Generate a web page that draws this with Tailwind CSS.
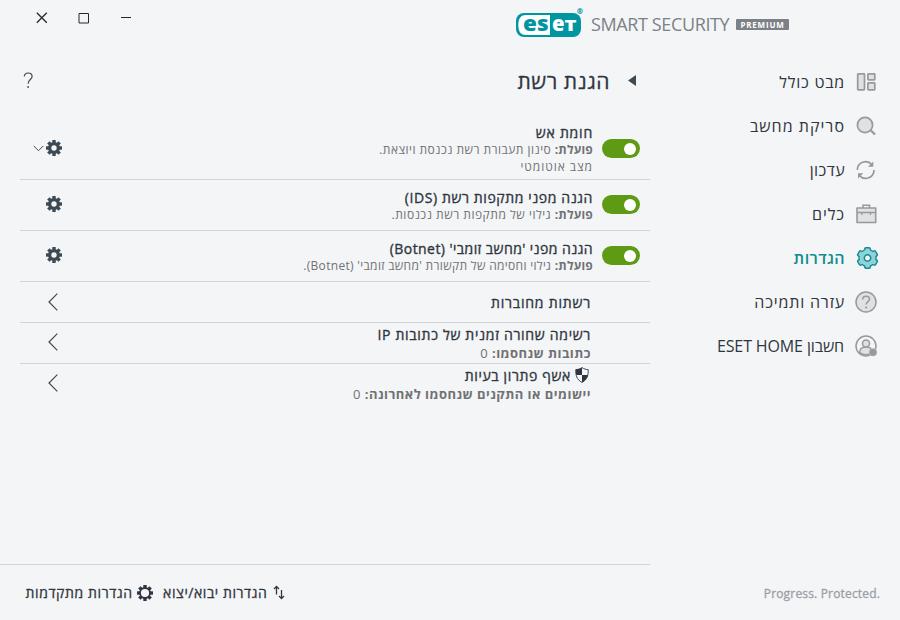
<!DOCTYPE html>
<html lang="he">
<head>
<meta charset="utf-8">
<title>ESET Smart Security Premium</title>
<script src="https://cdn.jsdelivr.net/npm/@tailwindcss/browser@4"></script>
</head>
<body class="w-[900px] h-[620px] overflow-hidden bg-[#f4f5f7] font-['Open_Sans','Noto_Sans',sans-serif] text-[#2f3640]">
<svg class="hidden">
  <symbol id="cog" viewBox="-8 -8 16 16">
    <g fill="#3d4a54"><g id="teeth"><rect x="-1.7" y="-8" width="3.4" height="16"/><rect x="-1.7" y="-8" width="3.4" height="16" transform="rotate(45)"/><rect x="-1.7" y="-8" width="3.4" height="16" transform="rotate(90)"/><rect x="-1.7" y="-8" width="3.4" height="16" transform="rotate(135)"/></g><circle r="6"/></g>
    <circle r="2.7" fill="#f4f5f7"/>
  </symbol>
  <symbol id="chev" viewBox="0 0 10 18"><path d="M9.3 .7 1 9l8.300 8.300" fill="none" stroke="#3d4a54" stroke-width="1.200"/></symbol>
</svg>

<div class="flex h-full flex-col">
  <header class="flex h-[48px] shrink-0">
    <div class="flex items-start pl-[36px] pt-[12px]">
      <svg class="w-[12px] h-[12px]" viewBox="0 0 12 12"><path d="M.8.8l10 10M10.800.8l-10 10" stroke="#24292f" stroke-width="1.300"/></svg>
      <svg class="ml-[30px] w-[12px] h-[12px]" viewBox="0 0 12 12"><path d="M1 1.500h9.500v9.500h-9.500z" fill="none" stroke="#24292f"/></svg>
      <svg class="ml-[30px] w-[12px] h-[12px]" viewBox="0 0 12 12"><path d="M1 5.500h10" stroke="#24292f"/></svg>
    </div>
    <div class="ml-[384px] flex">
      <svg class="mt-[8px] w-[68px] h-[30px]" viewBox="0 0 68 30">
        <rect x="0" y="5" width="65" height="24" rx="8" fill="#0096a1"/>
        <path d="M34 7H10C5 7 2.300 10 2.300 17S5 27 10 27h24z" fill="#fff"/>
        <text x="7" y="23" font-family="Open Sans" font-weight="800" font-size="21.500" fill="#0096a1" textLength="25.500" lengthAdjust="spacingAndGlyphs">es</text>
        <text x="36" y="23" font-family="Open Sans" font-weight="800" font-size="21.500" fill="#fff" textLength="12.500" lengthAdjust="spacingAndGlyphs">e</text>
        <text x="48.500" y="23" font-family="Open Sans" font-weight="800" font-size="16.500" fill="#fff" textLength="12" lengthAdjust="spacingAndGlyphs">T</text>
        <text x="61" y="6" font-family="Open Sans" font-size="7" fill="#0096a1" stroke="#0096a1" stroke-width=".2">®</text>
      </svg>
      <span class="ml-[7px] mt-[11px] w-[139px] whitespace-nowrap text-[18px] leading-[27px] tracking-[-0.38px] text-[#7b8186]">SMART SECURITY</span>
      <span class="ml-[6px] mt-[19px] flex h-[11px] w-[53px] items-center justify-center rounded-[1px] bg-[#7b8186]"><span class="text-[8px] font-bold leading-[11px] tracking-[0.8px] text-white">PREMIUM</span></span>
    </div>
  </header>

  <div class="flex flex-1">
    <main class="flex w-[650px] flex-col">
      <div class="flex h-[76px] items-start justify-between pl-[23px] pr-[14px]">
        <svg class="mt-[24px] w-[11px] h-[17px]" viewBox="0 0 11 17"><path d="M1.300 4.500C1.300 2.200 3 1 5.100 1s4 1.300 4 3.500c0 3-4 3.200-4 7.200" fill="none" stroke="#3d4a54" stroke-width="1.200"/><circle cx="5.100" cy="15" r=".9" fill="#3d4a54"/></svg>
        <div class="mt-[18px] flex items-center" dir="rtl">
          <svg class="w-[8px] h-[11px] -mt-[2px]" viewBox="0 0 8 11"><path d="M8 0v11L0 5.500z" fill="#3d4a54"/></svg>
          <h1 class="mr-[18px] whitespace-nowrap text-[21px] leading-[30px] tracking-[0.55px] [-webkit-text-stroke:0.3px]">הגנת רשת</h1>
        </div>
      </div>

      <section class="ml-[20px]">
        <div class="flex h-[56px] border-b border-[#d2d5d8] pl-[13px] pr-[10px]">
          <svg class="mt-[21px] w-[11px] h-[7px]" viewBox="0 0 11 7"><path d="M.8 1l4.700 4.700L10.200 1" fill="none" stroke="#3d4a54"/></svg>
          <svg class="ml-[2px] mt-[16px] w-[16px] h-[16px]"><use href="#cog"/></svg>
          <div class="ml-auto flex flex-col text-[12px] leading-[17px] text-[#6f7274]" dir="rtl">
            <div class="w-max text-[14px] tracking-[0.8px] text-[#2f3640] [-webkit-text-stroke:0.35px]">חומת אש</div>
            <div class="w-max tracking-[0.47px]"><b class="tracking-[0.2px]">פועלת:</b> סינון תעבורת רשת נכנסת ויוצאת.</div>
            <div class="w-max tracking-[0.95px]">מצב אוטומטי</div>
          </div>
          <span class="ml-[9px] mt-[15px] flex h-[19px] w-[38px] items-center justify-end rounded-full bg-[#5f9a14] pr-[4px]"><span class="h-[12px] w-[12px] rounded-full bg-white"></span></span>
        </div>
        <div class="flex h-[51px] border-b border-[#d2d5d8] pl-[26px] pr-[10px] pt-[9px]">
          <svg class="mt-[7px] w-[16px] h-[16px]"><use href="#cog"/></svg>
          <div class="ml-auto flex flex-col text-[12px] leading-[17px] text-[#6f7274]" dir="rtl">
            <div class="w-max text-[14px] tracking-[0.6px] text-[#2f3640] [-webkit-text-stroke:0.35px]">הגנה מפני מתקפות רשת (IDS)</div>
            <div class="w-max tracking-[0.52px]"><b class="tracking-[0.2px]">פועלת:</b> גילוי של מתקפות רשת נכנסות.</div>
          </div>
          <span class="ml-[9px] mt-[6px] flex h-[19px] w-[38px] items-center justify-end rounded-full bg-[#5f9a14] pr-[4px]"><span class="h-[12px] w-[12px] rounded-full bg-white"></span></span>
        </div>
        <div class="flex h-[51px] border-b border-[#d2d5d8] pl-[26px] pr-[10px] pt-[9px]">
          <svg class="mt-[7px] w-[16px] h-[16px]"><use href="#cog"/></svg>
          <div class="ml-auto flex flex-col text-[12px] leading-[17px] text-[#6f7274]" dir="rtl">
            <div class="w-max text-[14px] tracking-[0.43px] text-[#2f3640] [-webkit-text-stroke:0.35px]">הגנה מפני 'מחשב זומבי' (Botnet)</div>
            <div class="w-max tracking-[0.32px]"><b class="tracking-[0.2px]">פועלת:</b> גילוי וחסימה של תקשורת 'מחשב זומבי' (Botnet).</div>
          </div>
          <span class="ml-[9px] mt-[6px] flex h-[19px] w-[38px] items-center justify-end rounded-full bg-[#5f9a14] pr-[4px]"><span class="h-[12px] w-[12px] rounded-full bg-white"></span></span>
        </div>
        <div class="flex h-[41px] items-center justify-between border-b border-[#d2d5d8] pl-[27.5px] pr-[59px]">
          <svg class="w-[10px] h-[18px]"><use href="#chev"/></svg>
          <div class="w-max text-[14px] leading-[17px] tracking-[0.8px] [-webkit-text-stroke:0.35px]" dir="rtl">רשתות מחוברות</div>
        </div>
        <div class="flex h-[41px] items-start justify-between border-b border-[#d2d5d8] pl-[27.5px] pr-[59px]">
          <svg class="mt-[10px] w-[10px] h-[18px]"><use href="#chev"/></svg>
          <div class="mt-[3px] flex flex-col leading-[18px]" dir="rtl">
            <div class="w-max text-[14px] tracking-[0.7px] [-webkit-text-stroke:0.35px]">רשימה שחורה זמנית של כתובות IP</div>
            <div class="w-max text-[13px] tracking-[0.45px] text-[#6f7274]"><b>כתובות שנחסמו:</b> 0</div>
          </div>
        </div>
        <div class="flex h-[41px] items-start justify-between pl-[27.5px] pr-[59px]">
          <svg class="mt-[10px] w-[10px] h-[18px]"><use href="#chev"/></svg>
          <div class="mt-[3px] flex flex-col leading-[18px]" dir="rtl">
            <div class="flex items-center gap-[4px]">
              <svg class="mr-[2px] -mt-[2px] w-[14px] h-[16px]" viewBox="0 0 14 16"><path d="M7 .6C5 2 3 2.500.8 2.600.6 8 1.500 12.500 7 15.400c5.500-2.900 6.400-7.400 6.200-12.800C11 2.500 9 2 7 .6z" fill="#f4f5f7" stroke="#3d4a54"/><path d="M7 .6C5 2 3 2.500.8 2.600c-.1 2 0 3.900.4 5.400H7zM7 8h5.800c-.7 3.300-2.500 5.700-5.800 7.400z" fill="#2f3640"/></svg>
              <span class="w-max text-[14px] tracking-[0.65px] [-webkit-text-stroke:0.35px]">אשף פתרון בעיות</span>
            </div>
            <div class="w-max text-[13px] tracking-[0.47px] text-[#6f7274]"><b>יישומים או התקנים שנחסמו לאחרונה:</b> 0</div>
          </div>
        </div>
      </section>

      <footer class="mt-auto flex h-[56px] items-center border-t border-[#d2d5d8] pl-[25.5px] text-[14px]">
        <span class="whitespace-nowrap tracking-[0.6px] [-webkit-text-stroke:0.3px]" dir="rtl">הגדרות מתקדמות</span>
        <svg class="ml-[4px] w-[16px] h-[16px]" viewBox="-8 -8 16 16"><use href="#teeth" fill="#2f3640"/><circle r="5" fill="#f4f5f7" stroke="#2f3640" stroke-width="1.800"/></svg>
        <span class="ml-[10.5px] whitespace-nowrap tracking-[0.57px] [-webkit-text-stroke:0.3px]" dir="rtl">הגדרות יבוא/יצוא</span>
        <svg class="ml-[6px] w-[12px] h-[15px]" viewBox="0 0 12 15"><path d="M3.500 9.500V1.500M1 4l2.500-2.600L6 4M8.500 5v8.500M6 11l2.500 2.600L11 11" fill="none" stroke="#2f3640" stroke-width="1.300"/></svg>
      </footer>
    </main>

    <aside class="flex flex-1 flex-col pr-[21px]">
      <nav class="mt-[12px] flex flex-col text-[16px]" dir="rtl">
        <a class="flex h-[44px] items-center gap-[10px]"><svg class="w-[24px] h-[24px]" viewBox="0 0 24 24"><g fill="#e0e1e3" stroke="#999" stroke-width="1.700"><rect x="2.700" y="3.900" width="6.800" height="16" rx=".6"/><rect x="12.900" y="3.900" width="6.900" height="6" rx=".6"/><rect x="12.900" y="12.900" width="6.900" height="7" rx=".6"/></g></svg><span class="tracking-[0.75px]">מבט כולל</span></a>
        <a class="flex h-[44px] items-center gap-[10px]"><svg class="w-[24px] h-[24px]" viewBox="0 0 24 24"><path d="M15.500 16l4.500 4.500" stroke="#999" stroke-width="2.200"/><circle cx="10" cy="11" r="7.600" fill="#e0e1e3" stroke="#999" stroke-width="1.700"/></svg><span class="tracking-[1.02px]">סריקת מחשב</span></a>
        <a class="flex h-[44px] items-center gap-[10px]"><svg class="w-[24px] h-[24px]" viewBox="0 0 24 24"><path d="M2.300 12a8.300 8.300 0 0 1 14.500-5.500M19 12A8.300 8.300 0 0 1 4.700 17.800" fill="none" stroke="#999" stroke-width="1.700"/><path d="M18.300 3.500v5.300h-5.300zM3 20.500v-5.300h5.300z" fill="#999"/></svg><span class="tracking-[0.4px]">עדכון</span></a>
        <a class="flex h-[44px] items-center gap-[10px]"><svg class="w-[24px] h-[24px]" viewBox="0 0 24 24"><path d="M8 6V3.200h6.500V6" fill="none" stroke="#999" stroke-width="1.600"/><path d="M2 6h18.700v14.500H2zM2 10.500h18.700" fill="#e0e1e3" stroke="#999" stroke-width="1.600" stroke-linejoin="round"/><path d="M7 11v2M15.500 11v2" stroke="#999" stroke-width="1.300"/></svg><span class="tracking-[0.9px]">כלים</span></a>
        <a class="flex h-[44px] items-center gap-[10px] font-semibold text-[#128a8e]"><svg class="w-[24px] h-[24px]" viewBox="-12.5 -12 24 24"><g fill="#128a8e"><circle r="9.200"/><rect x="-3.500" y="-11" width="7" height="22" rx="2"/><rect x="-3.500" y="-11" width="7" height="22" rx="2" transform="rotate(60)"/><rect x="-3.500" y="-11" width="7" height="22" rx="2" transform="rotate(120)"/></g><g fill="#8fd3da"><circle r="7.900"/><rect x="-2.200" y="-9.600" width="4.400" height="19.200" rx="1"/><rect x="-2.200" y="-9.600" width="4.400" height="19.200" rx="1" transform="rotate(60)"/><rect x="-2.200" y="-9.600" width="4.400" height="19.200" rx="1" transform="rotate(120)"/></g><circle r="3.200" fill="#f4f5f7" stroke="#128a8e" stroke-width="1.500"/></svg><span class="tracking-[0.4px]">הגדרות</span></a>
        <a class="flex h-[44px] items-center gap-[10px]"><svg class="w-[24px] h-[24px]" viewBox="0 0 24 24"><circle cx="11" cy="12" r="10" fill="#e0e1e3" stroke="#999" stroke-width="1.500"/><path d="M7.700 9.500c0-2 1.500-3.200 3.400-3.200s3.400 1.200 3.400 3c0 2.300-3.300 2.300-3.300 5.200" fill="none" stroke="#999" stroke-width="1.500"/><circle cx="11.200" cy="17.500" r="1.100" fill="#999"/></svg><span class="tracking-[0.82px]">עזרה ותמיכה</span></a>
        <a class="flex h-[44px] items-center gap-[11px]"><svg class="w-[24px] h-[24px]" viewBox="0 0 24 24"><circle cx="11" cy="12" r="10" fill="#f4f5f7" stroke="#999" stroke-width="1.500"/><path d="M4.700 18.500c0-4 2-5.500 6.300-5.500s6.300 1.500 6.300 5.500c-3.500 3-9 3-12.600 0z" fill="#e0e1e3" stroke="#999" stroke-width="1.300"/><circle cx="11" cy="9.600" r="3.500" fill="#e0e1e3" stroke="#999" stroke-width="1.500"/><circle cx="18" cy="18.300" r="4" fill="#999" stroke="#f4f5f7" stroke-width=".3"/></svg><span class="whitespace-nowrap tracking-[-0.13px]">חשבון ESET HOME</span></a>
      </nav>
      <p class="mb-[17px] ml-auto mr-[-1px] mt-auto w-max text-[12px] leading-[18px] tracking-[0.17px] text-[#98a0a6] [-webkit-text-stroke:0.3px]">Progress. Protected.</p>
    </aside>
  </div>
</div>
</body>
</html>
